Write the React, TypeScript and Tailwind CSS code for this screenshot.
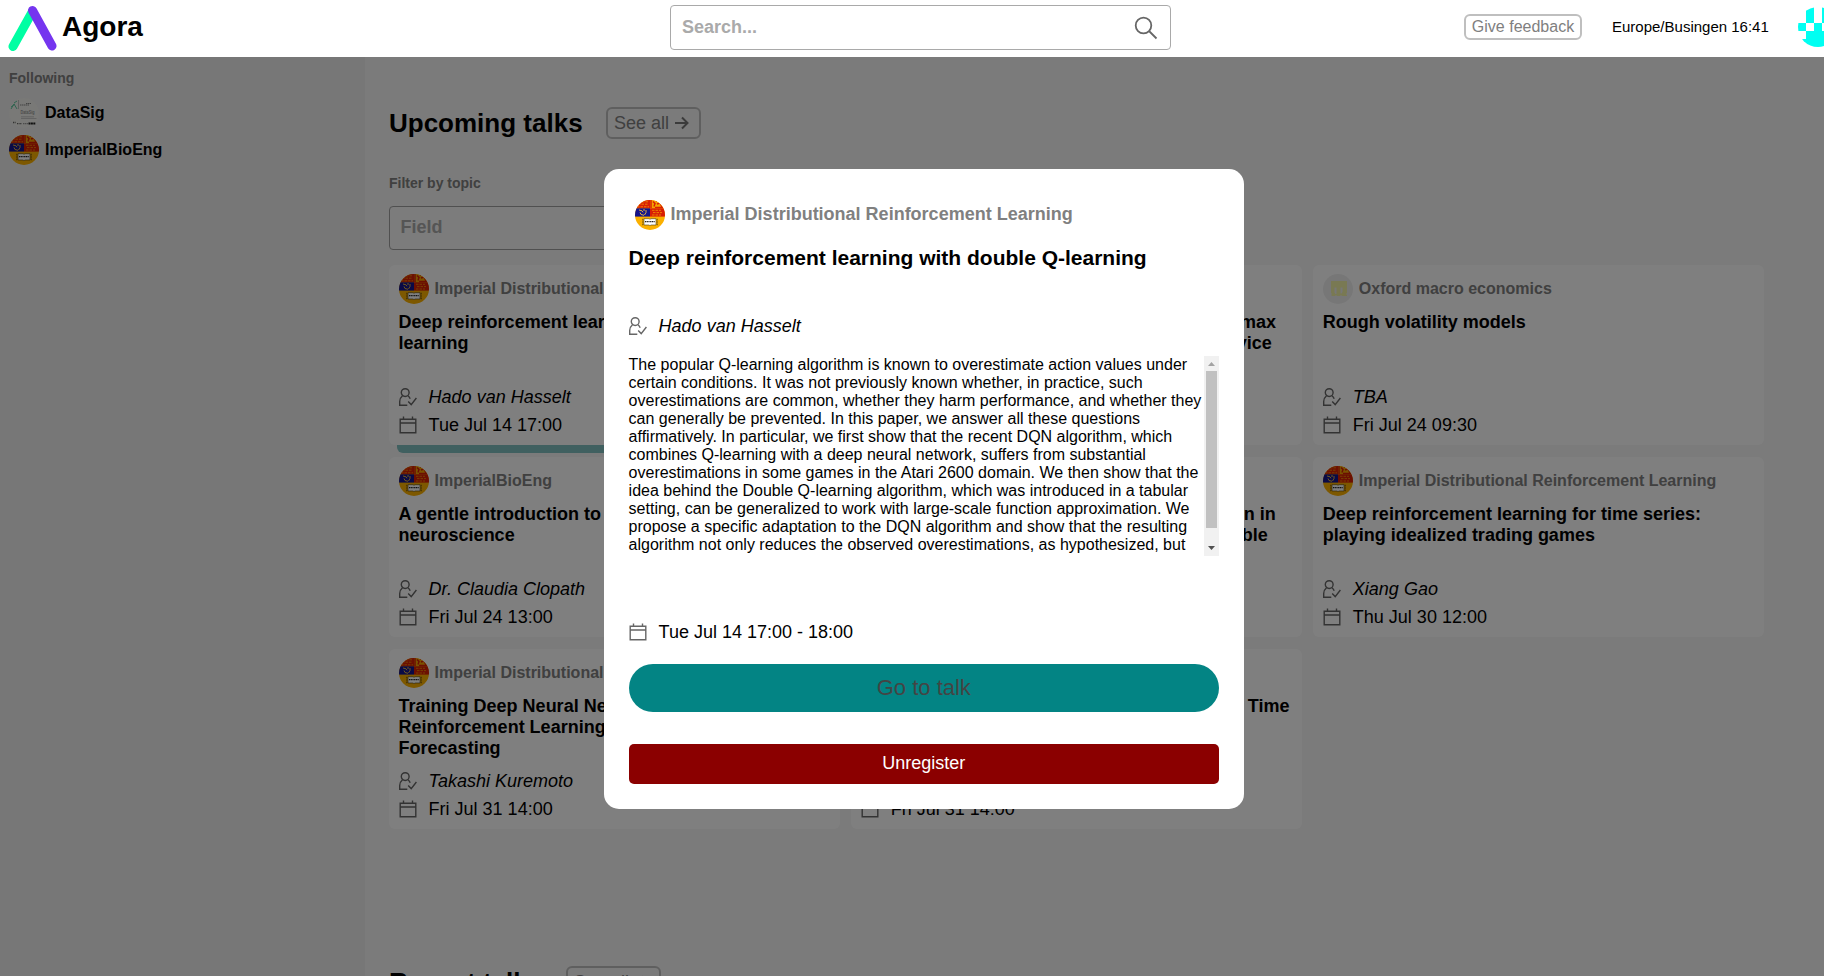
import React from "react";

function Crest({ className = "" }: { className?: string }) {
  return (
    <svg viewBox="0 0 30 30" className={"size-[30px] shrink-0 " + className}>
      <clipPath id="crest">
        <circle cx="15" cy="15" r="15" />
      </clipPath>
      <g clipPath="url(#crest)">
        <rect width="30" height="30" fill="#fbb000" />
        <rect width="15" height="8.3" fill="#d81e05" />
        <rect x="15" width="15" height="8.3" fill="#f5a400" />
        <path d="M3 4.200h10M2 6.800h12M7 1.800h6" stroke="#f08a00" strokeWidth="0.9" strokeDasharray="2.500 1" />
        <path d="M16 0v8M18 1.500l2 2-1 3M21 1h6M22 4l3-1 2 4M20 7.500h9" stroke="#d81e05" strokeWidth="1.500" fill="none" />
        <rect y="8.3" width="15" height="8.300" fill="#14148c" />
        <path d="M4 10l3 .8 1 1.500M5 12.500l1 2 3 .8M11 10v2.500l-1.500 2.500M8 10h2" stroke="#e0b040" strokeWidth="1" fill="none" />
        <rect x="15" y="8.3" width="15" height="8.3" fill="#d81e05" />
        <path d="M17 10.300h9M18 12.600h9M17 15h9" stroke="#f08a00" strokeWidth="0.9" strokeDasharray="2.500 1" />
        <path d="M9 18.700h5l1 .6 1-.6h5v6.300h-5l-1 .7-1-.7H9z" fill="#fff" stroke="#4a3a10" strokeWidth=".6" />
        <path d="M10 21.700h10" stroke="#222" strokeWidth="1.200" strokeDasharray="1.200 .5" />
        <path d="M7.800 18.800v6.400M22.200 18.800v6.400" stroke="#4a3a10" strokeWidth="1" strokeDasharray="1 .8" />
      </g>
    </svg>
  );
}

function DataSigLogo() {
  return (
    <svg viewBox="0 0 30 30" className="size-[30px] shrink-0">
      <circle cx="15" cy="15" r="15" fill="#f2f2ee" />
      <path d="M2 11l3-5 3 5M5 5l3-2M2 9l4-3" stroke="#60c8a0" strokeWidth="1" fill="none" />
      <path d="M9.500 2v9" stroke="#aaa" strokeWidth=".7" />
      <path d="M11 7h9M17 5.500h5" stroke="#888" strokeWidth="1.100" strokeDasharray="1.500 .5" />
      <text x="11.500" y="15.800" fontSize="5.500" textLength="14" lengthAdjust="spacingAndGlyphs" fill="#999" fontFamily="Liberation Sans">
        DataSig
      </text>
      <path d="M12 18.800h13M12 20.500h15.500" stroke="#bbb" strokeWidth=".8" />
      <path d="M4 24.500h3M8 25.700h5" stroke="#666" strokeWidth="1.300" strokeDasharray="1 .6" />
      <path d="M14 25.700h5" stroke="#999" strokeWidth="1.200" strokeDasharray="1.500 .5" />
      <path d="M19.500 25.500h7" stroke="#222" strokeWidth="1.800" strokeDasharray="2 .4" />
    </svg>
  );
}

function OxfordLogo() {
  return (
    <svg viewBox="0 0 30 30" className="size-[30px] shrink-0">
      <circle cx="15" cy="15" r="15" fill="#efefef" />
      <path
        d="M8 7h16v12l-1 1 1 1v1h-5l-1-1-1 1h-3l-1-1-1 1H9l-1-1 1-1-1-1zM11.500 13.500v5l1 1.500h1V13.500zM17.500 13.500v6h1l1-1.500v-4.500z"
        fill="#f2f2a6"
        fillRule="evenodd"
      />
    </svg>
  );
}

function UserCheck() {
  return (
    <svg viewBox="0 0 18 18" className="size-[18px] shrink-0" fill="none" stroke="#666" strokeWidth="1.400">
      <circle cx="6.200" cy="4.600" r="3.900" />
      <path d="M3.500 7.800C1.500 9.500.7 11 .7 13.500v3.700h7.600M9 7.800c1 .8 1.700 1.700 2.200 2.900" />
      <path d="M9.200 13.600l3 3 5.200-6.600" />
    </svg>
  );
}

function CalendarIcon() {
  return (
    <svg viewBox="0 0 18 18" className="size-[18px] shrink-0" fill="none" stroke="#666" strokeWidth="1.400">
      <path d="M1.200 3.200h15.600v13.600H1.200zM1.200 7h15.600M4.500.5v2.700M13.500.5v2.700" />
    </svg>
  );
}

function SeeAll() {
  return (
    <div className="flex h-8 w-[95px] items-center rounded-[6px] border-2 border-[#bfbfbf] pl-[6px] text-[18px] leading-none text-[#808080]">
      See all
      <svg viewBox="0 0 14 14" className="ml-[6px] size-[14px]" fill="none" stroke="#777" strokeWidth="2">
        <path d="M0 7h12.500M7 1.500L12.500 7 7 12.500" />
      </svg>
    </div>
  );
}

type Talk = {
  channel: string;
  title: string[];
  speaker: string;
  date: string;
  logo?: "oxford";
  registered?: boolean;
};

const talks: Talk[] = [
  { channel: "Imperial Distributional Reinforcement Learning", title: ["Deep reinforcement learning with double Q-", "learning"], speaker: "Hado van Hasselt", date: "Tue Jul 14 17:00", registered: true },
  { channel: "DataSig", title: ["Relaxing the I.I.D assumption: Adaptive minimax", "optimal sequential prediction with expert advice"], speaker: "TBA", date: "Tue Jul 21 17:00" },
  { channel: "Oxford macro economics", title: ["Rough volatility models"], speaker: "TBA", date: "Fri Jul 24 09:30", logo: "oxford" },
  { channel: "ImperialBioEng", title: ["A gentle introduction to computational", "neuroscience"], speaker: "Dr. Claudia Clopath", date: "Fri Jul 24 13:00" },
  { channel: "ImperialBioEng", title: ["Learning and memory: functional propagation in", "neural circuits of the cerebellum with adaptable"], speaker: "TBA", date: "Tue Jul 28 16:00" },
  { channel: "Imperial Distributional Reinforcement Learning", title: ["Deep reinforcement learning for time series:", "playing idealized trading games"], speaker: "Xiang Gao", date: "Thu Jul 30 12:00" },
  { channel: "Imperial Distributional Reinforcement Learning", title: ["Training Deep Neural Networks with", "Reinforcement Learning for Time Series", "Forecasting"], speaker: "Takashi Kuremoto", date: "Fri Jul 31 14:00" },
  { channel: "DataSig", title: ["Bag-of-words Representation for Biomedical Time", "Series Classification"], speaker: "TBA", date: "Fri Jul 31 14:00" },
];

function TalkCard({ talk }: { talk: Talk }) {
  return (
    <div className="relative h-[180px]">
      <div className="flex h-[180px] flex-col rounded-[6px] bg-white px-[9.6px] pt-[9px]">
        <div className="flex h-[30px] items-center gap-[6px] text-[16px] font-bold text-[#808080]">
          {talk.logo ? <OxfordLogo /> : <Crest />}
          <span className="whitespace-nowrap">{talk.channel}</span>
        </div>
        <div className="mt-[8px] h-[73px] text-[18px] leading-[21px] font-bold whitespace-nowrap">
          {talk.title.map((line) => (
            <div key={line}>{line}</div>
          ))}
        </div>
        <div className="mt-[-2px] flex h-7 items-center gap-3 text-[18px] italic">
          <UserCheck />
          {talk.speaker}
        </div>
        <div className="flex h-7 items-center gap-3 text-[18px]">
          <CalendarIcon />
          {talk.date}
        </div>
      </div>
      {talk.registered && <div className="absolute top-[180px] left-2 h-2 w-[434px] rounded-b-[6px] bg-[#80c0c0]" />}
    </div>
  );
}

function Header() {
  return (
    <header className="flex h-[57px] w-full shrink-0 items-center overflow-hidden bg-white">
      <div className="flex w-[670px] shrink-0 items-center">
        <svg viewBox="0 0 50 48" className="ml-2 h-12 w-[50px]" fill="none" strokeWidth="9" strokeLinecap="round">
          <path d="M24.500 6.500L5 41.500" stroke="#00ffa3" />
          <path d="M24.500 5.500L44 41" stroke="#7535ef" />
        </svg>
        <span className="mb-[3px] ml-1 text-[28px] leading-[52px] font-bold">Agora</span>
      </div>
      <div className="mb-[2px] flex h-[45px] w-[501px] shrink-0 items-center justify-between rounded-[4px] border border-[#a9a9a9] px-[11px] text-[18px] font-bold text-[#aaa]">
        Search...
        <svg viewBox="0 0 24 24" className="mr-[1px] size-6" fill="none" stroke="#666" strokeWidth="1.800">
          <circle cx="9.500" cy="9.500" r="7.800" />
          <path d="M15 15l7.500 7.500" />
        </svg>
      </div>
      <div className="mb-[3px] ml-[293px] flex h-[26px] w-[118px] shrink-0 items-center justify-center rounded-[6px] border-2 border-[#bfbfbf] text-[16px] leading-none whitespace-nowrap text-[#808080]">
        Give feedback
      </div>
      <span className="mb-[3px] ml-[30px] w-[186px] shrink-0 text-[15px]">Europe/Busingen 16:41</span>
      <svg viewBox="0 0 40 40" className="mb-[3px] size-10 shrink-0">
        <clipPath id="avatar">
          <circle cx="20" cy="20" r="20" />
        </clipPath>
        <g clipPath="url(#avatar)" fill="#00fff2">
          <path d="M8 0h8v16H8zM24 0h8v16h-8zM0 16h8v8H0zM16 16h8v8h-8zM32 16h8v8h-8zM8 24h24v16H8zM0 32h40v8H0z" />
        </g>
      </svg>
    </header>
  );
}

function ScrollBar() {
  return (
    <div className="flex h-[200px] w-[15px] shrink-0 flex-col items-center justify-between bg-[#f1f1f1]">
      <svg viewBox="0 0 15 15" className="size-[15px]">
        <path d="M4 10l3.500-4L11 10z" fill="#a3a3a3" />
      </svg>
      <div className="mb-[13px] h-[157px] w-[11px] bg-[#c1c1c1]" />
      <svg viewBox="0 0 15 15" className="size-[15px]">
        <path d="M4 5l3.500 4L11 5z" fill="#505050" />
      </svg>
    </div>
  );
}

const abstractLines = [
  "The popular Q-learning algorithm is known to overestimate action values under",
  "certain conditions. It was not previously known whether, in practice, such",
  "overestimations are common, whether they harm performance, and whether they",
  "can generally be prevented. In this paper, we answer all these questions",
  "affirmatively. In particular, we first show that the recent DQN algorithm, which",
  "combines Q-learning with a deep neural network, suffers from substantial",
  "overestimations in some games in the Atari 2600 domain. We then show that the",
  "idea behind the Double Q-learning algorithm, which was introduced in a tabular",
  "setting, can be generalized to work with large-scale function approximation. We",
  "propose a specific adaptation to the DQN algorithm and show that the resulting",
  "algorithm not only reduces the observed overestimations, as hypothesized, but",
];

function TalkModal() {
  return (
    <div className="absolute top-[169px] left-[604px] flex h-[640px] w-[640px] flex-col rounded-[15px] bg-white pr-[25px] pl-[24.6px]">
      <div className="mt-[31px] ml-[6px] flex h-[30px] items-center gap-[6px] text-[18px] font-bold text-[#808080]">
        <Crest />
        <span className="mb-[2px]">Imperial Distributional Reinforcement Learning</span>
      </div>
      <h2 className="mt-[16px] text-[21px] leading-6 font-bold">Deep reinforcement learning with double Q-learning</h2>
      <div className="mt-[42px] flex h-7 items-center gap-3 text-[18px] italic">
        <UserCheck />
        Hado van Hasselt
      </div>
      <div className="mt-[16px] flex h-[200px] justify-between">
        <div className="text-[16px] leading-[18px] whitespace-nowrap">
          {abstractLines.map((line) => (
            <div key={line}>{line}</div>
          ))}
        </div>
        <ScrollBar />
      </div>
      <div className="mt-[62px] flex h-7 items-center gap-3 text-[18px]">
        <CalendarIcon />
        Tue Jul 14 17:00 - 18:00
      </div>
      <button className="mt-[18px] h-12 rounded-full bg-[#038484] pb-[2px] text-[22px] text-[#444]">Go to talk</button>
      <button className="mt-8 h-10 rounded-[5px] bg-[#8b0000] pb-[2px] text-[18px] text-white">Unregister</button>
    </div>
  );
}

export default function App() {
  return (
    <div className="relative flex h-[976px] w-[1824px] flex-col overflow-hidden font-['Liberation_Sans',Arial,sans-serif] leading-normal text-black">
      <Header />
      <div className="relative flex h-[919px]">
        <aside className="w-[365px] shrink-0 bg-[#eeeeee] px-[9px] pt-[11px]">
          <div className="text-[14px] leading-[21px] font-bold text-[#808080]">Following</div>
          <div className="mt-[9px] flex h-[30px] items-center gap-[6px] text-[16px] font-bold">
            <DataSigLogo />
            DataSig
          </div>
          <div className="mt-[7px] flex h-[30px] items-center gap-[6px] text-[16px] font-bold">
            <Crest />
            ImperialBioEng
          </div>
        </aside>
        <main className="flex-1 overflow-hidden bg-[#f6f6f6] pl-6">
          <div className="flex items-center pt-[50px]">
            <h1 className="w-[217px] text-[26px] leading-8 font-bold whitespace-nowrap">Upcoming talks</h1>
            <SeeAll />
          </div>
          <div className="mt-[34px] text-[14px] leading-[21px] font-bold text-[#808080]">Filter by topic</div>
          <div className="mt-[12px] flex h-11 w-[300px] items-center rounded-[4px] border border-[#a0a0a0] bg-[#f8f8f8] pb-[2px] pl-[10.5px] text-[18px] font-bold text-[#aaa]">
            Field
          </div>
          <div className="mt-[15px] grid w-[1375px] grid-cols-3 gap-x-[11.4px] gap-y-[12px]">
            {talks.map((talk) => (
              <TalkCard key={talk.title[0]} talk={talk} />
            ))}
          </div>
          <div className="mt-[137px] flex items-center">
            <h1 className="w-[177px] text-[26px] leading-8 font-bold whitespace-nowrap">Recent talks</h1>
            <SeeAll />
          </div>
        </main>
        <div className="absolute inset-0 bg-black/50" />
      </div>
      <TalkModal />
    </div>
  );
}
